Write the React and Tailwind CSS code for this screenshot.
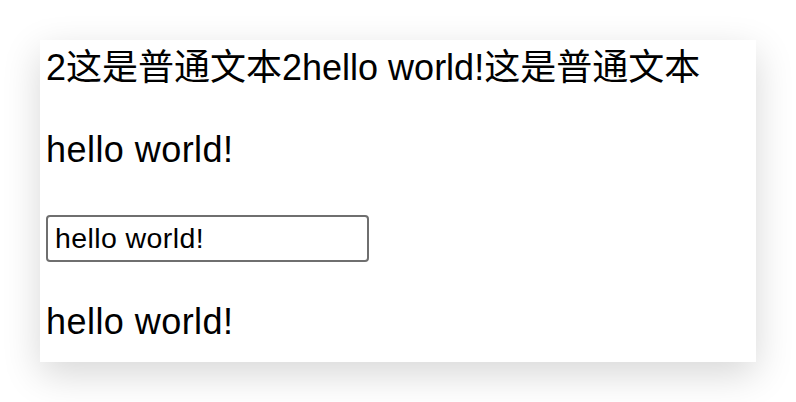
export default function App() {
  const font = { fontFamily: '"Liberation Sans", "Noto Sans CJK SC", sans-serif' };

  return (
    <div className="min-h-[402px] w-[796px] bg-white p-[40px]" style={font}>
      <div className="flex h-[322px] w-[716px] flex-col items-start bg-white pl-[6px] pt-[10px] text-black shadow-[0_12px_36px_rgba(0,0,0,0.16)]">
        <div className="text-[36px] leading-[36px] whitespace-nowrap">2这是普通文本2hello world!这是普通文本</div>
        <p className="mt-[46px] text-[36px] leading-[36px] tracking-[0.45px]">hello world!</p>
        <input
          className="mt-[47px] h-[47px] w-[323px] rounded-[4px] border-2 border-[#6f6f6f] bg-white pl-[7px] pr-[5px] text-[28.5px] tracking-[0.4px] text-black outline-none"
          defaultValue="hello world!"
          style={font}
        />
        <p className="mt-[42px] text-[36px] leading-[36px] tracking-[0.45px]">hello world!</p>
      </div>
    </div>
  );
}
